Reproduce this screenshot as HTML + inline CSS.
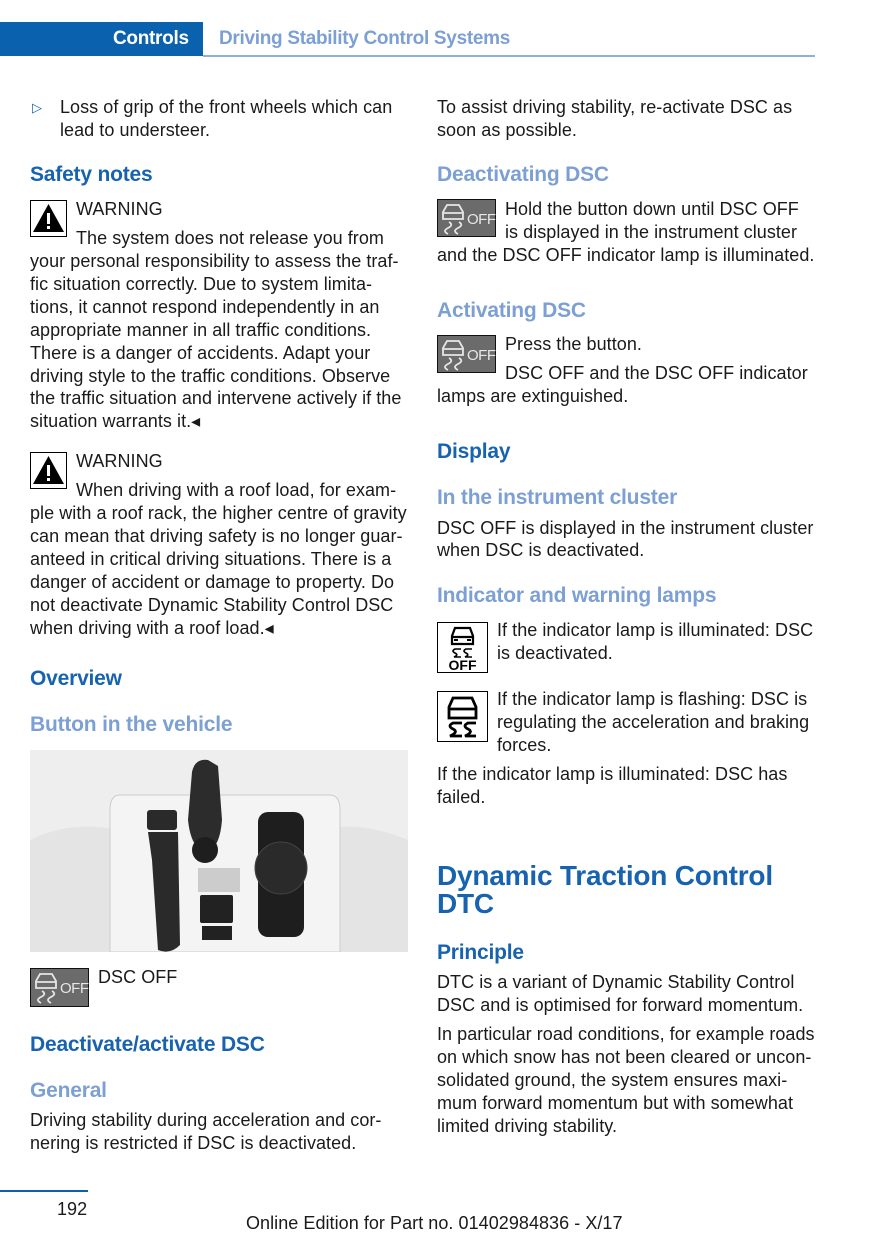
<!DOCTYPE html>
<html><head><meta charset="utf-8"><style>
body{margin:0;width:875px;height:1241px;background:#fff;position:relative;overflow:hidden;font-family:"Liberation Sans",sans-serif;color:#1a1a1a}
.t{position:absolute;font-size:18px;line-height:23px;white-space:nowrap;letter-spacing:0.05px}
.h{position:absolute;font-size:21px;line-height:24px;font-weight:bold;white-space:nowrap;letter-spacing:-0.2px;color:#1763b0}
.s{position:absolute;font-size:21px;line-height:24px;font-weight:bold;white-space:nowrap;letter-spacing:-0.2px;color:#7c9fd4}
.ic{position:absolute}
</style></head><body>
<div style="position:absolute;left:0;top:22px;width:203px;height:34px;background:#0a62ae"></div>
<div style="position:absolute;left:203px;top:55px;width:612px;height:2px;background:#8fb0dd"></div>
<div style="position:absolute;left:113px;top:28px;font-size:19px;font-weight:bold;color:#fff;letter-spacing:-0.3px">Controls</div>
<div style="position:absolute;left:219px;top:28px;font-size:19px;font-weight:bold;color:#7c9fd4;letter-spacing:-0.3px">Driving Stability Control Systems</div>

<!-- left column -->
<div class="t" style="left:32px;top:96px;color:#1763b0;font-size:13px">▷</div>
<div class="t" style="left:60px;top:96px">Loss of grip of the front wheels which can</div>
<div class="t" style="left:60px;top:119px">lead to understeer.</div>
<div class="h" style="left:30px;top:163px">Safety notes</div>
<svg class="ic" style="left:30px;top:200px" width="37" height="37"><rect x="0.5" y="0.5" width="36" height="36" fill="#fff" stroke="#000"/><path d="M18.5 4 L34 32 H3 Z" fill="#000"/><rect x="17" y="13" width="3" height="11" fill="#fff"/><rect x="17" y="26" width="3" height="3" fill="#fff"/></svg>
<div class="t" style="left:76px;top:198px">WARNING</div>
<div class="t" style="left:76px;top:227px">The system does not release you from</div>
<div class="t" style="left:30px;top:250px">your personal responsibility to assess the traf-</div>
<div class="t" style="left:30px;top:273px">fic situation correctly. Due to system limita-</div>
<div class="t" style="left:30px;top:296px">tions, it cannot respond independently in an</div>
<div class="t" style="left:30px;top:319px">appropriate manner in all traffic conditions.</div>
<div class="t" style="left:30px;top:342px">There is a danger of accidents. Adapt your</div>
<div class="t" style="left:30px;top:365px">driving style to the traffic conditions. Observe</div>
<div class="t" style="left:30px;top:387px">the traffic situation and intervene actively if the</div>
<div class="t" style="left:30px;top:410px">situation warrants it.◂</div>
<svg class="ic" style="left:30px;top:452px" width="37" height="37"><rect x="0.5" y="0.5" width="36" height="36" fill="#fff" stroke="#000"/><path d="M18.5 4 L34 32 H3 Z" fill="#000"/><rect x="17" y="13" width="3" height="11" fill="#fff"/><rect x="17" y="26" width="3" height="3" fill="#fff"/></svg>
<div class="t" style="left:76px;top:450px">WARNING</div>
<div class="t" style="left:76px;top:479px">When driving with a roof load, for exam-</div>
<div class="t" style="left:30px;top:502px">ple with a roof rack, the higher centre of gravity</div>
<div class="t" style="left:30px;top:525px">can mean that driving safety is no longer guar-</div>
<div class="t" style="left:30px;top:548px">anteed in critical driving situations. There is a</div>
<div class="t" style="left:30px;top:571px">danger of accident or damage to property. Do</div>
<div class="t" style="left:30px;top:594px">not deactivate Dynamic Stability Control DSC</div>
<div class="t" style="left:30px;top:617px">when driving with a roof load.◂</div>
<div class="h" style="left:30px;top:667px">Overview</div>
<div class="s" style="left:30px;top:713px">Button in the vehicle</div>

<svg class="ic" style="left:30px;top:750px" width="378" height="202">
<rect width="378" height="202" fill="#eeeeee"/>
<path d="M0 90 Q40 70 90 80 L100 202 H0Z" fill="#e4e4e4"/>
<path d="M378 90 Q330 70 290 80 L280 202 H378Z" fill="#e4e4e4"/>
<path d="M90 45 H300 Q310 45 310 60 V202 H80 V60 Q80 45 90 45Z" fill="#f4f4f4" stroke="#ccc"/>
<rect x="117" y="60" width="30" height="20" rx="3" fill="#2a2a2a"/>
<path d="M118 82 H148 L150 195 Q140 205 128 200 L122 110Z" fill="#2a2a2a"/>
<path d="M162 22 Q165 8 178 10 L188 16 L192 70 Q190 95 180 100 L168 98 Q160 90 158 70Z" fill="#2c2c2c"/>
<circle cx="175" cy="100" r="13" fill="#1e1e1e"/>
<rect x="168" y="118" width="42" height="24" fill="#ccc"/>
<rect x="170" y="145" width="33" height="28" rx="2" fill="#222"/>
<rect x="172" y="176" width="30" height="14" fill="#222"/>
<rect x="228" y="62" width="46" height="125" rx="10" fill="#1e1e1e"/>
<circle cx="251" cy="118" r="26" fill="#2a2a2a" stroke="#444"/>
</svg>

<svg class="ic" style="left:30px;top:968px" width="59" height="39"><rect x="0.5" y="0.5" width="58" height="38" fill="#6b6b6b" stroke="#111"/><g stroke="#e6e6e6" fill="none" stroke-width="1.8"><path d="M6 20 V13 L10 6 H22 L26 13 V20 Z M6 14 H26"/><path d="M12 23 Q17 26 11 29 Q5 32 11 35 M22 23 Q27 26 21 29 Q15 32 21 35"/></g><text x="30" y="25" fill="#e6e6e6" font-family="Liberation Sans" font-size="15" letter-spacing="-0.5">OFF</text></svg>
<div class="t" style="left:98px;top:966px">DSC OFF</div>
<div class="h" style="left:30px;top:1033px">Deactivate/activate DSC</div>
<div class="s" style="left:30px;top:1079px">General</div>
<div class="t" style="left:30px;top:1109px">Driving stability during acceleration and cor-</div>
<div class="t" style="left:30px;top:1132px">nering is restricted if DSC is deactivated.</div>

<!-- right column -->
<div class="t" style="left:437px;top:96px">To assist driving stability, re-activate DSC as</div>
<div class="t" style="left:437px;top:119px">soon as possible.</div>
<div class="s" style="left:437px;top:163px">Deactivating DSC</div>
<svg class="ic" style="left:437px;top:199px" width="59" height="38"><rect x="0.5" y="0.5" width="58" height="37" fill="#6b6b6b" stroke="#111"/><g stroke="#e6e6e6" fill="none" stroke-width="1.8"><path d="M6 20 V13 L10 6 H22 L26 13 V20 Z M6 14 H26"/><path d="M12 23 Q17 26 11 29 Q5 32 11 35 M22 23 Q27 26 21 29 Q15 32 21 35"/></g><text x="30" y="25" fill="#e6e6e6" font-family="Liberation Sans" font-size="15" letter-spacing="-0.5">OFF</text></svg>
<div class="t" style="left:505px;top:198px">Hold the button down until DSC OFF</div>
<div class="t" style="left:505px;top:221px">is displayed in the instrument cluster</div>
<div class="t" style="left:437px;top:244px">and the DSC OFF indicator lamp is illuminated.</div>
<div class="s" style="left:437px;top:299px">Activating DSC</div>
<svg class="ic" style="left:437px;top:335px" width="59" height="38"><rect x="0.5" y="0.5" width="58" height="37" fill="#6b6b6b" stroke="#111"/><g stroke="#e6e6e6" fill="none" stroke-width="1.8"><path d="M6 20 V13 L10 6 H22 L26 13 V20 Z M6 14 H26"/><path d="M12 23 Q17 26 11 29 Q5 32 11 35 M22 23 Q27 26 21 29 Q15 32 21 35"/></g><text x="30" y="25" fill="#e6e6e6" font-family="Liberation Sans" font-size="15" letter-spacing="-0.5">OFF</text></svg>
<div class="t" style="left:505px;top:333px">Press the button.</div>
<div class="t" style="left:505px;top:362px">DSC OFF and the DSC OFF indicator</div>
<div class="t" style="left:437px;top:385px">lamps are extinguished.</div>
<div class="h" style="left:437px;top:440px">Display</div>
<div class="s" style="left:437px;top:486px">In the instrument cluster</div>
<div class="t" style="left:437px;top:517px">DSC OFF is displayed in the instrument cluster</div>
<div class="t" style="left:437px;top:539px">when DSC is deactivated.</div>
<div class="s" style="left:437px;top:584px">Indicator and warning lamps</div>
<svg class="ic" style="left:437px;top:622px" width="51" height="51"><rect x="0.5" y="0.5" width="50" height="50" fill="#fff" stroke="#000"/><g stroke="#000" fill="none" stroke-width="2.2"><path d="M15 22 V14 L18 6 H33 L36 14 V22 Z M15 15 H36"/><path d="M24 27 H18 Q14 29 18 31 Q22 33 17 35 H24 M35 27 H29 Q25 29 29 31 Q33 33 28 35 H35" stroke-width="1.6"/></g><rect x="17" y="17" width="4" height="2" fill="#000"/><rect x="30" y="17" width="4" height="2" fill="#000"/><text x="25.5" y="48" text-anchor="middle" fill="#000" font-family="Liberation Sans" font-weight="bold" font-size="14">OFF</text></svg>
<div class="t" style="left:497px;top:619px">If the indicator lamp is illuminated: DSC</div>
<div class="t" style="left:497px;top:642px">is deactivated.</div>
<svg class="ic" style="left:437px;top:691px" width="51" height="51"><rect x="0.5" y="0.5" width="50" height="50" fill="#fff" stroke="#000"/><g stroke="#000" fill="none" stroke-width="2.8"><path d="M12 27 V16 L16 7 H35 L39 16 V27 Z M12 18 H39"/><path d="M25 32 H16 Q10 35 16 38 Q22 41 13 45 H25 M39 32 H31 Q25 35 31 38 Q37 41 28 45 H39"/></g></svg>
<div class="t" style="left:497px;top:688px">If the indicator lamp is flashing: DSC is</div>
<div class="t" style="left:497px;top:711px">regulating the acceleration and braking</div>
<div class="t" style="left:497px;top:734px">forces.</div>
<div class="t" style="left:437px;top:763px">If the indicator lamp is illuminated: DSC has</div>
<div class="t" style="left:437px;top:786px">failed.</div>
<div style="position:absolute;left:437px;top:862px;font-size:28px;line-height:28px;font-weight:bold;color:#1763b0;letter-spacing:-0.2px">Dynamic Traction Control<br>DTC</div>
<div class="h" style="left:437px;top:941px">Principle</div>
<div class="t" style="left:437px;top:971px">DTC is a variant of Dynamic Stability Control</div>
<div class="t" style="left:437px;top:994px">DSC and is optimised for forward momentum.</div>
<div class="t" style="left:437px;top:1023px">In particular road conditions, for example roads</div>
<div class="t" style="left:437px;top:1046px">on which snow has not been cleared or uncon-</div>
<div class="t" style="left:437px;top:1069px">solidated ground, the system ensures maxi-</div>
<div class="t" style="left:437px;top:1092px">mum forward momentum but with somewhat</div>
<div class="t" style="left:437px;top:1115px">limited driving stability.</div>

<div style="position:absolute;left:0;top:1190px;width:88px;height:2px;background:#0a62ae"></div>
<div class="t" style="left:57px;top:1198px">192</div>
<div class="t" style="left:246px;top:1212px">Online Edition for Part no. 01402984836 - X/17</div>
</body></html>
